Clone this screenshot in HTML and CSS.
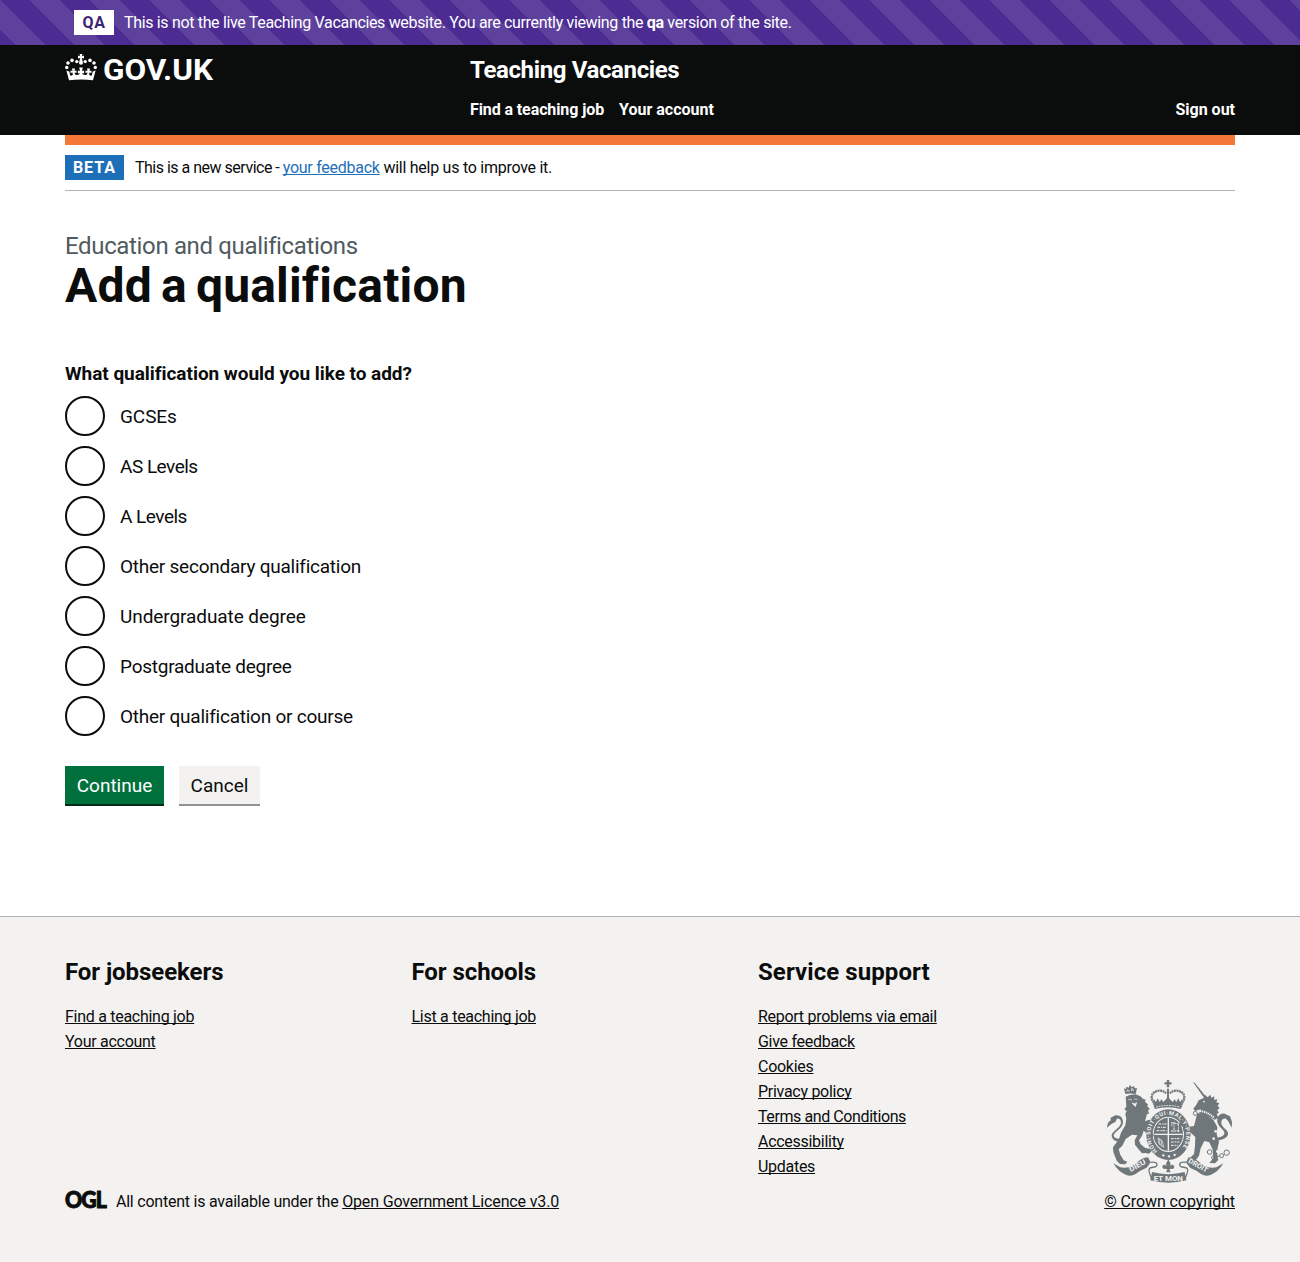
FILE: index.html
```html
<!DOCTYPE html>
<html lang="en">
<head>
<meta charset="utf-8">
<title>Add a qualification - Teaching Vacancies</title>
<link rel="stylesheet" href="styles.css">
</head>
<body>
<div class="env-banner">
  <strong class="env-tag">QA</strong>
  <span class="env-text">This is not the live Teaching Vacancies website. You are currently viewing the <b>qa</b> version of the site.</span>
</div>

<header class="header">
  <div class="container header-inner">
    <a class="header-logo" href="#" aria-label="GOV.UK">
      <svg width="32" height="28" viewBox="0 0 32 28" fill="#fff">
        <path d="M14.500 0h3l-.7 2.200 2.200-.6v3l-2.200-.6 1.200 4.800a2 2 0 1 1-4 0L15.200 4 13 4.600v-3l2.200.6z"/>
        <circle cx="11.800" cy="7.600" r="1.700"/><circle cx="20.200" cy="7.600" r="1.700"/>
        <circle cx="7" cy="6.400" r="1.800"/><circle cx="25" cy="6.400" r="1.800"/>
        <circle cx="3" cy="9" r="1.800"/><circle cx="29" cy="9" r="1.800"/>
        <circle cx="1.700" cy="13.500" r="1.700"/><circle cx="30.300" cy="13.500" r="1.700"/>
        <path d="M4 26.300L1.400 16.500l2.800 1 1.200 4.200q1.500-.2 2.500-1l-.4-2.200-2 .6v-2.600l2 .5-.5-2.600h3l-.5 2.600 2-.5v2.600l-2-.6q0 2.700 2.600 2.500 2.300-.2 2.900-2l-2.100.5v-3l2.100.5-.8-3.500h3.600l-.8 3.500 2.100-.5v3l-2.100-.5q.6 1.800 2.900 2 2.600.2 2.600-2.500l-2 .6v-2.600l2 .5-.5-2.600h3l-.5 2.600 2-.5v2.600l-2-.6-.4 2.200q1 .8 2.500 1l1.200-4.200 2.800-1L28 26.300q-12-1.800-24 0z"/>
      </svg>
      <svg class="wordmark" width="112" height="28" viewBox="0 0 112 28"><text class="logo-text" x="-1" y="26" textLength="110" lengthAdjust="spacingAndGlyphs">GOV.UK</text></svg>
    </a>
    <div class="header-content">
      <a class="service-name" href="#">Teaching Vacancies</a>
      <nav class="nav">
        <a class="nav-find" href="#">Find a teaching job</a>
        <a href="#">Your account</a>
        <a class="nav-end" href="#">Sign out</a>
      </nav>
    </div>
  </div>
</header>

<div class="container">
  <div class="stripe"></div>
  <div class="phase">
    <strong class="phase-tag">BETA</strong>
    <span class="phase-text"><span class="phase-lead">This is a new service - </span><a href="#">your feedback</a> will help us to improve it.</span>
  </div>

  <main class="main">
    <span class="caption">Education and qualifications</span>
    <h1>Add a qualification</h1>
    <form>
      <fieldset>
        <legend>What qualification would you like to add?</legend>
        <label class="radio"><input type="radio" name="q"><span class="t1">GCSEs</span></label>
        <label class="radio"><input type="radio" name="q"><span class="t3">AS Levels</span></label>
        <label class="radio"><input type="radio" name="q"><span class="t3">A Levels</span></label>
        <label class="radio"><input type="radio" name="q"><span class="t2">Other secondary qualification</span></label>
        <label class="radio"><input type="radio" name="q"><span class="t1">Undergraduate degree</span></label>
        <label class="radio"><input type="radio" name="q"><span class="t2">Postgraduate degree</span></label>
        <label class="radio"><input type="radio" name="q"><span class="t2">Other qualification or course</span></label>
      </fieldset>
      <div class="buttons">
        <button class="btn btn-go" type="button">Continue</button>
        <button class="btn btn-cancel" type="button">Cancel</button>
      </div>
    </form>
  </main>
</div>

<footer class="footer">
  <div class="container">
    <div class="footer-nav">
      <section>
        <h2>For jobseekers</h2>
        <ul><li><a href="#">Find a teaching job</a></li><li><a href="#">Your account</a></li></ul>
      </section>
      <section>
        <h2>For schools</h2>
        <ul><li><a href="#">List a teaching job</a></li></ul>
      </section>
      <section>
        <h2 class="wide">Service support</h2>
        <ul>
          <li><a href="#">Report problems via email</a></li>
          <li><a href="#">Give feedback</a></li>
          <li><a href="#">Cookies</a></li>
          <li><a href="#">Privacy policy</a></li>
          <li><a class="tight" href="#">Terms and Conditions</a></li>
          <li><a href="#">Accessibility</a></li>
          <li><a href="#">Updates</a></li>
        </ul>
      </section>
    </div>
    <div class="footer-meta">
      <div class="licence">
        <svg width="41" height="18" viewBox="0 0 41 18" aria-label="OGL"><text class="ogl" x="0" y="17" textLength="41" lengthAdjust="spacingAndGlyphs">OGL</text></svg>
        <span class="licence-text">All content is available under the <a href="#">Open Government Licence v3.0</a></span>
      </div>
      <div class="copyright">
        <svg class="arms" width="127" height="104" viewBox="48 27 381 312" fill="#6f777b">
          <defs><path id="garter" d="M203 243a54 60 0 1 1 66-2"/></defs>
          <!-- crown -->
          <path d="M230 30h8l-1 7 7-1v8l-7-1 1 9h-8l1-9-7 1v-8l7 1z"/>
          <path d="M231 56h6v34h-6z"/>
          <path d="M196 112c-4-18-14-22-10-36 4-14 32-20 42-6M272 112c4-18 14-22 10-36-4-14-32-20-42-6" fill="none" stroke="#6f777b" stroke-width="7" stroke-dasharray="6 1.5"/>
          <path d="M191 86l7 10 5-11 6 11 5-8 6 8 6-6 8-10 8 10 6 6 6-8 5 8 6-11 5 11 7-10-5 31q-38-10-78 0z"/>
          <path d="M198 111q36-9 72 0" fill="none" stroke="#f3f2f1" stroke-width="3" stroke-dasharray="5 3"/>
          <!-- garter and shield -->
          <ellipse cx="235" cy="194" rx="66" ry="76"/>
          <ellipse cx="235" cy="193" rx="47" ry="53" fill="#f3f2f1"/>
          <ellipse cx="235" cy="193" rx="44" ry="50"/>
          <path d="M235 145v97M193 193h85" stroke="#f3f2f1" stroke-width="4"/>
          <g fill="none" stroke="#f3f2f1" stroke-width="3" stroke-dasharray="8 3 4 2">
            <path d="M206 162h24M202 172h28M200 182h30M243 206h29M243 216h26M243 226h20M243 165h4M252 156v30M265 161v26M243 158l24 4M243 183h28"/>
          </g>
          <path d="M204 204q15 4 17 28M204 204l2 16 15 12M209 206v18M214 209v20" fill="none" stroke="#f3f2f1" stroke-width="2"/>
          <!-- lion -->
          <path d="M106 72l-4-17 6 2 1-7 7 3 4-9 5 8 7-4 2 7 7-1-4 18q-16-3-31 0z"/>
          <path d="M110 65l3-6 5 6M124 63l2-8 5 8" fill="none" stroke="#f3f2f1" stroke-width="2.5"/>
          <path d="M107 80l12-5 18-2 14 6 9 8 7 2-2 6 10 9-4 3 9 11-6 2 3 11-6 1-6 22 13-5 12 8-11 12 3 15 9 12-7 14-13-19-10-9-5 16-9 13 5 12 14 11 14 2 5 8-8 7-11-2-10 1-11-13-10-13-1-13 8-15-16-2-19 13-10 20-11 11 5 16 10 17 11 4-6 8-16-1-10-10-10-26-1-14 7-10 10-12 7-22 13-22 3-20-3-14 4-9-7-5 6-8z"/>
          <path d="M115 88l11 2M133 87l9 2M126 99q8 4 14-1l-4 12z" fill="#f3f2f1" stroke="#f3f2f1" stroke-width="2"/>
          <path d="M99 216C76 218 64 207 65 195c2-12 27-22 28-37 0-9-6-13-12-12l-5 10-12 6-13 11c2-12 3-18 12-22l-2-7 12-7c14-4 26 5 26 19 0 20-27 29-28 40 0 8 10 12 28 10z"/>
          <!-- unicorn -->
          <path d="M309 36l5 2 39 48-7 3z"/>
          <path d="M341 84l4-10 8 8 8-8 3 9 9-4-1 10 10-1-3 9 9 3-5 8 6 6-7 6 5 9-7 2 5 12-10 6-48-19 6-12-18 5-5-7 9-12 7-13z"/>
          <circle cx="342" cy="95" r="2.5" fill="#f3f2f1"/>
          <path d="M330 123q22 2 43 21" fill="none" stroke="#f3f2f1" stroke-width="6" stroke-dasharray="4 2"/>
          <path d="M322 129l24 6 24 14 12 22-2 22 7 22-4 19-1 23 3 13-10 10-17-1 12-14-2-26-10-22-15-4-11 22-5 22-10 14-25 4 8-11 12-12 3-25 1-26-13-12-5 22-11-6 6-16-13-8-2-16-6 7-7-10 10-9 13 8 11 9 13-2z"/>
          <path d="M372 213c34-2 48-16 40-29-8-10-19-16-18-27 0-9 7-13 14-11l7 8 10 19 1-17-6-17-16-8c-16-3-24 12-22 25 3 15 19 22 21 31 2 9-8 16-28 17z"/>
          <g fill="none" stroke="#6f777b" stroke-width="3"><circle cx="316" cy="130" r="6"/><circle cx="359" cy="246" r="7"/><circle cx="371" cy="263" r="6"/><circle cx="395" cy="257" r="6"/><circle cx="410" cy="248" r="8"/><path d="M377 260l13-2"/></g>
          <g fill="#f3f2f1"><circle cx="377" cy="184" r="4"/><circle cx="371" cy="206" r="4"/><circle cx="383" cy="244" r="5"/></g>
          <!-- garter lettering, over the supporters' paws -->
          <text class="arms-text"><textPath href="#garter" textLength="272" lengthAdjust="spacing">HONI·SOIT·QUI·MAL·Y·PENSE</textPath></text>
          <g fill="#f3f2f1"><circle cx="220" cy="256" r="3.5"/><circle cx="237" cy="259" r="3.5"/><circle cx="254" cy="255" r="3.500"/></g>
          <!-- motto ribbon -->
          <path d="M70 280l21 12q35 5 54-18 16-12 29-12l8 15-12 16q-20 8-33 19-14 8-28 3-24-9-39-35z"/>
          <path d="M400 280l-21 12q-35 5-54-18-16-12-29-12l-8 15 12 16q20 8 33 19 14 8 28 3 24-9 39-35z"/>
          <path d="M186 306q49 13 98 0l5 25q-54 14-108 0z"/>
          <path d="M182 277c24-3 22 12 12 14-10 2-21 0-16 17l8 22M288 277c-24-3-22 12-12 14 10 2 21 0 16 17l-8 22" fill="none" stroke="#6f777b" stroke-width="4"/>
          <path d="M235 268l7 13-4 11c4-12 16-8 15 0q-3 8-10 4l-5 2 4 9h-14l4-9-5-2q-7 4-10-4c-1-8 11-12 15 0l-4-11z"/>
          <text class="motto" transform="translate(122 306) rotate(-29)" textLength="54" lengthAdjust="spacingAndGlyphs">DIEU</text>
          <text class="motto" x="191" y="332" textLength="88" lengthAdjust="spacingAndGlyphs">ET MON</text>
          <text class="motto" transform="translate(293 277) rotate(29)" textLength="64" lengthAdjust="spacingAndGlyphs">DROIT</text>
        </svg>
        <a href="#">© Crown copyright</a>
      </div>
    </div>
  </div>
</footer>
</body>
</html>
```
FILE: styles.css
```css
* { box-sizing: border-box; }
body {
  margin: 0;
  background: #fff;
  color: #0b0c0c;
  font: 16px/20px Roboto, "Liberation Sans", sans-serif;
  letter-spacing: -0.25px;
}
svg { display: block; overflow: visible; }
a { color: inherit; }
ul, h1, h2, fieldset { margin: 0; padding: 0; border: 0; }
ul { list-style: none; }
.container { width: 1170px; margin: 0 auto; }

/* environment banner */
.env-banner {
  display: flex;
  align-items: center;
  gap: 10px;
  height: 45px;
  padding-left: 74px;
  color: #fff;
  background: repeating-linear-gradient(45deg, #4c2c92 0 10.607px, #5e419d 10.607px 31.82px, #4c2c92 31.82px 42.426px);
}
.env-tag {
  width: 40px;
  height: 25px;
  background: #fff;
  color: #3d2375;
  line-height: 25px;
  text-align: center;
  letter-spacing: .5px;
}
.env-text { letter-spacing: -0.335px; }

/* header */
.header { height: 90px; background: #0b0c0c; color: #fff; }
.header a { text-decoration: none; }
.header-inner { display: flex; }
.header-logo { display: flex; gap: 7px; width: 405px; padding-top: 9px; }
.logo-text { font: 700 29.6px Roboto, sans-serif; fill: #fff; letter-spacing: 0; }
.header-content { flex: 1; padding-top: 10px; }
.service-name {
  display: block;
  font-size: 24px;
  font-weight: 700;
  line-height: 30px;
  letter-spacing: -0.37px;
}
.nav { display: flex; gap: 15px; padding-top: 15px; font-weight: 700; letter-spacing: 0; }
.nav-find { letter-spacing: -0.1px; }
.nav-end { margin-left: auto; letter-spacing: 0; }
.stripe { height: 10px; background: #f47738; }

/* phase banner */
.phase {
  display: flex;
  align-items: center;
  gap: 11px;
  height: 46px;
  border-bottom: 1px solid #b1b4b6;
}
.phase-tag {
  width: 59px;
  height: 25px;
  background: #1d70b8;
  color: #fff;
  line-height: 25px;
  text-align: center;
  letter-spacing: 1px;
}
.phase-text { letter-spacing: -0.26px; }
.phase-lead { letter-spacing: -0.5px; }
.phase-text a { color: #1d70b8; }
.phase a, .footer a { text-underline-offset: 1px; text-decoration-thickness: 1px; text-decoration-skip-ink: none; }

/* main content */
.main { padding-top: 40px; height: 725px; }
.caption {
  display: block;
  color: #505a5f;
  font-size: 24px;
  line-height: 30px;
  letter-spacing: -0.35px;
}
h1 { margin-bottom: 50px; font-size: 48px; line-height: 50px; letter-spacing: .18px; word-spacing: -3px; }
legend {
  padding: 0;
  margin-bottom: 10px;
  font-size: 19px;
  font-weight: 700;
  line-height: 25px;
  letter-spacing: -0.04px;
}
.radio {
  display: flex;
  align-items: center;
  gap: 15px;
  height: 40px;
  margin-bottom: 10px;
  font-size: 19px;
}
.radio span { padding-top: 1px; }
.radio input {
  appearance: none;
  width: 40px;
  height: 40px;
  margin: 0;
  border: 2px solid #0b0c0c;
  border-radius: 50%;
}
.t1 { letter-spacing: -0.08px; }
.t2 { letter-spacing: -0.24px; }
.t3 { letter-spacing: -0.5px; }
.buttons { display: flex; gap: 15px; padding-top: 20px; }
.btn {
  height: 38px;
  padding: 0;
  border: 0;
  font: 19px/39px Roboto, "Liberation Sans", sans-serif;
}
.btn-go { width: 99px; background: #00703c; color: #fff; box-shadow: 0 2px 0 #002d18; }
.btn-cancel { width: 81px; background: #f3f2f1; color: #0b0c0c; box-shadow: 0 2px 0 #929191; }

/* footer */
.footer {
  height: 346px;
  padding-top: 40px;
  border-top: 1px solid #b1b4b6;
  background: #f3f2f1;
  letter-spacing: -0.1px;
}
.footer-nav { display: grid; grid-template-columns: 346.5px 346.5px 1fr; letter-spacing: -0.28px; }
h2 { margin-bottom: 20px; font-size: 24px; line-height: 30px; letter-spacing: -0.07px; }
.wide { letter-spacing: .08px; }
.footer li { height: 20px; margin-bottom: 5px; }
.tight { letter-spacing: -0.41px; }
.footer-meta { display: flex; justify-content: space-between; align-items: flex-end; margin-top: -103px; }
.licence { display: flex; align-items: center; gap: 10px; }
.licence svg { margin-bottom: 3px; }
.licence-text { letter-spacing: -0.23px; }
.licence-text a { letter-spacing: -0.15px; }
.ogl { font: 900 23px Lato, sans-serif; fill: #0b0c0c; stroke: #0b0c0c; stroke-width: 1px; letter-spacing: -1px; }
.copyright { display: flex; flex-direction: column; align-items: flex-end; }
.arms { margin: 0 2px 9px 0; }
.arms-text { font: 700 17px Roboto, sans-serif; fill: #f3f2f1; letter-spacing: 0; }
.motto { font: 700 21px Roboto, sans-serif; fill: #f3f2f1; letter-spacing: 0; }
```
